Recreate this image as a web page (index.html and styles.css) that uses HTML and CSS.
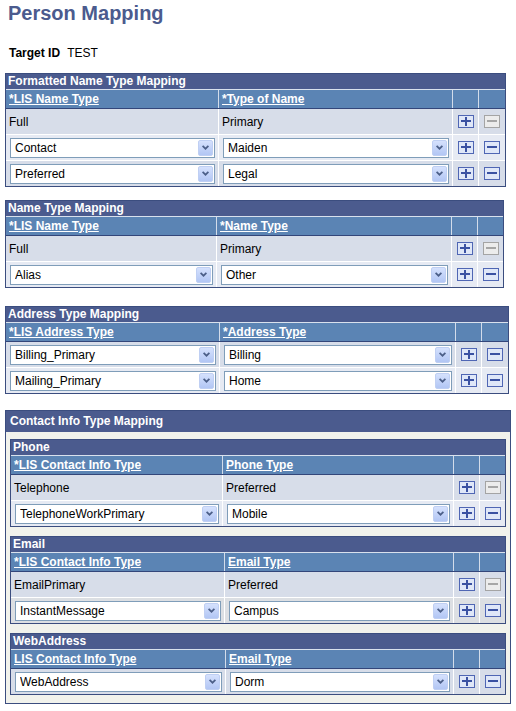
FILE: index.html
```html
<!DOCTYPE html>
<html>
<head>
<meta charset="utf-8">
<title>Person Mapping</title>
<link rel="stylesheet" href="styles.css">
</head>
<body>
<div class="page">
  <h1 class="page-title">Person Mapping</h1>
  <div class="target"><span class="label">Target ID</span> TEST</div>

  <div class="grid g-fmt">
    <div class="grid-title">Formatted Name Type Mapping</div>
    <div class="row hdr">
      <div class="cell"><a href="#">*LIS Name Type</a></div>
      <div class="cell"><a href="#">*Type of Name</a></div>
      <div class="cell"></div>
      <div class="cell"></div>
    </div>
    <div class="row data odd">
      <div class="cell txt">Full</div>
      <div class="cell txt">Primary</div>
      <div class="cell btn-cell"><svg class="ib" viewBox="0 0 16 13"><rect x=".5" y=".5" width="15" height="12" class="ib-add-box"/><path d="M3 6h10M8 2v9" class="ib-add-mark"/></svg></div>
      <div class="cell btn-cell"><svg class="ib" viewBox="0 0 16 13"><rect x=".5" y=".5" width="15" height="12" class="ib-dis-box"/><path d="M3 6h10" class="ib-dis-mark"/></svg></div>
    </div>
    <div class="row data even">
      <div class="cell sel-cell"><div class="select"><span class="val">Contact</span><span class="arrow"><svg width="7" height="5" viewBox="0 0 7 5"><path d="M.6 .8 3.5 3.7 6.4 .8" class="chev"/></svg></span></div></div>
      <div class="cell sel-cell"><div class="select"><span class="val">Maiden</span><span class="arrow"><svg width="7" height="5" viewBox="0 0 7 5"><path d="M.6 .8 3.5 3.7 6.4 .8" class="chev"/></svg></span></div></div>
      <div class="cell btn-cell"><svg class="ib" viewBox="0 0 16 13"><rect x=".5" y=".5" width="15" height="12" class="ib-add-box"/><path d="M3 6h10M8 2v9" class="ib-add-mark"/></svg></div>
      <div class="cell btn-cell"><svg class="ib" viewBox="0 0 16 13"><rect x=".5" y=".5" width="15" height="12" class="ib-add-box"/><path d="M3 6h10" class="ib-add-mark"/></svg></div>
    </div>
    <div class="row data odd">
      <div class="cell sel-cell"><div class="select"><span class="val">Preferred</span><span class="arrow"><svg width="7" height="5" viewBox="0 0 7 5"><path d="M.6 .8 3.5 3.7 6.4 .8" class="chev"/></svg></span></div></div>
      <div class="cell sel-cell"><div class="select"><span class="val">Legal</span><span class="arrow"><svg width="7" height="5" viewBox="0 0 7 5"><path d="M.6 .8 3.5 3.7 6.4 .8" class="chev"/></svg></span></div></div>
      <div class="cell btn-cell"><svg class="ib" viewBox="0 0 16 13"><rect x=".5" y=".5" width="15" height="12" class="ib-add-box"/><path d="M3 6h10M8 2v9" class="ib-add-mark"/></svg></div>
      <div class="cell btn-cell"><svg class="ib" viewBox="0 0 16 13"><rect x=".5" y=".5" width="15" height="12" class="ib-add-box"/><path d="M3 6h10" class="ib-add-mark"/></svg></div>
    </div>
  </div>

  <div class="grid g-name">
    <div class="grid-title">Name Type Mapping</div>
    <div class="row hdr">
      <div class="cell"><a href="#">*LIS Name Type</a></div>
      <div class="cell"><a href="#">*Name Type</a></div>
      <div class="cell"></div>
      <div class="cell"></div>
    </div>
    <div class="row data odd">
      <div class="cell txt">Full</div>
      <div class="cell txt">Primary</div>
      <div class="cell btn-cell"><svg class="ib" viewBox="0 0 16 13"><rect x=".5" y=".5" width="15" height="12" class="ib-add-box"/><path d="M3 6h10M8 2v9" class="ib-add-mark"/></svg></div>
      <div class="cell btn-cell"><svg class="ib" viewBox="0 0 16 13"><rect x=".5" y=".5" width="15" height="12" class="ib-dis-box"/><path d="M3 6h10" class="ib-dis-mark"/></svg></div>
    </div>
    <div class="row data even">
      <div class="cell sel-cell"><div class="select"><span class="val">Alias</span><span class="arrow"><svg width="7" height="5" viewBox="0 0 7 5"><path d="M.6 .8 3.5 3.7 6.4 .8" class="chev"/></svg></span></div></div>
      <div class="cell sel-cell"><div class="select"><span class="val">Other</span><span class="arrow"><svg width="7" height="5" viewBox="0 0 7 5"><path d="M.6 .8 3.5 3.7 6.4 .8" class="chev"/></svg></span></div></div>
      <div class="cell btn-cell"><svg class="ib" viewBox="0 0 16 13"><rect x=".5" y=".5" width="15" height="12" class="ib-add-box"/><path d="M3 6h10M8 2v9" class="ib-add-mark"/></svg></div>
      <div class="cell btn-cell"><svg class="ib" viewBox="0 0 16 13"><rect x=".5" y=".5" width="15" height="12" class="ib-add-box"/><path d="M3 6h10" class="ib-add-mark"/></svg></div>
    </div>
  </div>

  <div class="grid g-addr">
    <div class="grid-title">Address Type Mapping</div>
    <div class="row hdr">
      <div class="cell"><a href="#">*LIS Address Type</a></div>
      <div class="cell"><a href="#">*Address Type</a></div>
      <div class="cell"></div>
      <div class="cell"></div>
    </div>
    <div class="row data odd">
      <div class="cell sel-cell"><div class="select"><span class="val">Billing_Primary</span><span class="arrow"><svg width="7" height="5" viewBox="0 0 7 5"><path d="M.6 .8 3.5 3.7 6.4 .8" class="chev"/></svg></span></div></div>
      <div class="cell sel-cell"><div class="select"><span class="val">Billing</span><span class="arrow"><svg width="7" height="5" viewBox="0 0 7 5"><path d="M.6 .8 3.5 3.7 6.4 .8" class="chev"/></svg></span></div></div>
      <div class="cell btn-cell"><svg class="ib" viewBox="0 0 16 13"><rect x=".5" y=".5" width="15" height="12" class="ib-add-box"/><path d="M3 6h10M8 2v9" class="ib-add-mark"/></svg></div>
      <div class="cell btn-cell"><svg class="ib" viewBox="0 0 16 13"><rect x=".5" y=".5" width="15" height="12" class="ib-add-box"/><path d="M3 6h10" class="ib-add-mark"/></svg></div>
    </div>
    <div class="row data even">
      <div class="cell sel-cell"><div class="select"><span class="val">Mailing_Primary</span><span class="arrow"><svg width="7" height="5" viewBox="0 0 7 5"><path d="M.6 .8 3.5 3.7 6.4 .8" class="chev"/></svg></span></div></div>
      <div class="cell sel-cell"><div class="select"><span class="val">Home</span><span class="arrow"><svg width="7" height="5" viewBox="0 0 7 5"><path d="M.6 .8 3.5 3.7 6.4 .8" class="chev"/></svg></span></div></div>
      <div class="cell btn-cell"><svg class="ib" viewBox="0 0 16 13"><rect x=".5" y=".5" width="15" height="12" class="ib-add-box"/><path d="M3 6h10M8 2v9" class="ib-add-mark"/></svg></div>
      <div class="cell btn-cell"><svg class="ib" viewBox="0 0 16 13"><rect x=".5" y=".5" width="15" height="12" class="ib-add-box"/><path d="M3 6h10" class="ib-add-mark"/></svg></div>
    </div>
  </div>

  <div class="section">
    <div class="section-title">Contact Info Type Mapping</div>
    <div class="section-body">

      <div class="grid g-phone">
        <div class="grid-title">Phone</div>
        <div class="row hdr">
          <div class="cell"><a href="#">*LIS Contact Info Type</a></div>
          <div class="cell"><a href="#">Phone Type</a></div>
          <div class="cell"></div>
          <div class="cell"></div>
        </div>
        <div class="row data odd">
          <div class="cell txt">Telephone</div>
          <div class="cell txt">Preferred</div>
          <div class="cell btn-cell"><svg class="ib" viewBox="0 0 16 13"><rect x=".5" y=".5" width="15" height="12" class="ib-add-box"/><path d="M3 6h10M8 2v9" class="ib-add-mark"/></svg></div>
          <div class="cell btn-cell"><svg class="ib" viewBox="0 0 16 13"><rect x=".5" y=".5" width="15" height="12" class="ib-dis-box"/><path d="M3 6h10" class="ib-dis-mark"/></svg></div>
        </div>
        <div class="row data even">
          <div class="cell sel-cell"><div class="select"><span class="val">TelephoneWorkPrimary</span><span class="arrow"><svg width="7" height="5" viewBox="0 0 7 5"><path d="M.6 .8 3.5 3.7 6.4 .8" class="chev"/></svg></span></div></div>
          <div class="cell sel-cell"><div class="select"><span class="val">Mobile</span><span class="arrow"><svg width="7" height="5" viewBox="0 0 7 5"><path d="M.6 .8 3.5 3.7 6.4 .8" class="chev"/></svg></span></div></div>
          <div class="cell btn-cell"><svg class="ib" viewBox="0 0 16 13"><rect x=".5" y=".5" width="15" height="12" class="ib-add-box"/><path d="M3 6h10M8 2v9" class="ib-add-mark"/></svg></div>
          <div class="cell btn-cell"><svg class="ib" viewBox="0 0 16 13"><rect x=".5" y=".5" width="15" height="12" class="ib-add-box"/><path d="M3 6h10" class="ib-add-mark"/></svg></div>
        </div>
      </div>

      <div class="grid g-email">
        <div class="grid-title">Email</div>
        <div class="row hdr">
          <div class="cell"><a href="#">*LIS Contact Info Type</a></div>
          <div class="cell"><a href="#">Email Type</a></div>
          <div class="cell"></div>
          <div class="cell"></div>
        </div>
        <div class="row data odd">
          <div class="cell txt">EmailPrimary</div>
          <div class="cell txt">Preferred</div>
          <div class="cell btn-cell"><svg class="ib" viewBox="0 0 16 13"><rect x=".5" y=".5" width="15" height="12" class="ib-add-box"/><path d="M3 6h10M8 2v9" class="ib-add-mark"/></svg></div>
          <div class="cell btn-cell"><svg class="ib" viewBox="0 0 16 13"><rect x=".5" y=".5" width="15" height="12" class="ib-dis-box"/><path d="M3 6h10" class="ib-dis-mark"/></svg></div>
        </div>
        <div class="row data even gray">
          <div class="cell sel-cell"><div class="select"><span class="val">InstantMessage</span><span class="arrow"><svg width="7" height="5" viewBox="0 0 7 5"><path d="M.6 .8 3.5 3.7 6.4 .8" class="chev"/></svg></span></div></div>
          <div class="cell sel-cell"><div class="select"><span class="val">Campus</span><span class="arrow"><svg width="7" height="5" viewBox="0 0 7 5"><path d="M.6 .8 3.5 3.7 6.4 .8" class="chev"/></svg></span></div></div>
          <div class="cell btn-cell"><svg class="ib" viewBox="0 0 16 13"><rect x=".5" y=".5" width="15" height="12" class="ib-add-box"/><path d="M3 6h10M8 2v9" class="ib-add-mark"/></svg></div>
          <div class="cell btn-cell"><svg class="ib" viewBox="0 0 16 13"><rect x=".5" y=".5" width="15" height="12" class="ib-add-box"/><path d="M3 6h10" class="ib-add-mark"/></svg></div>
        </div>
      </div>

      <div class="grid g-web">
        <div class="grid-title">WebAddress</div>
        <div class="row hdr">
          <div class="cell"><a href="#">LIS Contact Info Type</a></div>
          <div class="cell"><a href="#">Email Type</a></div>
          <div class="cell"></div>
          <div class="cell"></div>
        </div>
        <div class="row data odd">
          <div class="cell sel-cell"><div class="select"><span class="val">WebAddress</span><span class="arrow"><svg width="7" height="5" viewBox="0 0 7 5"><path d="M.6 .8 3.5 3.7 6.4 .8" class="chev"/></svg></span></div></div>
          <div class="cell sel-cell"><div class="select"><span class="val">Dorm</span><span class="arrow"><svg width="7" height="5" viewBox="0 0 7 5"><path d="M.6 .8 3.5 3.7 6.4 .8" class="chev"/></svg></span></div></div>
          <div class="cell btn-cell"><svg class="ib" viewBox="0 0 16 13"><rect x=".5" y=".5" width="15" height="12" class="ib-add-box"/><path d="M3 6h10M8 2v9" class="ib-add-mark"/></svg></div>
          <div class="cell btn-cell"><svg class="ib" viewBox="0 0 16 13"><rect x=".5" y=".5" width="15" height="12" class="ib-add-box"/><path d="M3 6h10" class="ib-add-mark"/></svg></div>
        </div>
      </div>

    </div>
  </div>
</div>
</body>
</html>
```

FILE: styles.css
```css
body {
  margin: 0;
  background: #fff;
  color: #000;
  font-family: "Liberation Sans", Arial, sans-serif;
  font-size: 12px;
}

.page {
  padding-left: 5px;
}

.page-title {
  margin: 0;
  padding: 1px 0 0 3px;
  font-size: 20px;
  line-height: 24px;
  font-weight: bold;
  color: #4b5b8e;
}

.target {
  margin-top: 21px;
  padding-left: 4px;
  line-height: 14px;
}

.target .label {
  font-weight: bold;
  margin-right: 4px;
}

/* ---------- grids ---------- */
.grid {
  box-sizing: border-box;
  border: 1px solid #3b4d7f;
  background: #d7dde9;
}

.g-fmt  { width: 501px; margin-top: 13px; --cols: 212px 234px 26px 27px; }
.g-name { width: 499px; margin-top: 13px; --cols: 210px 235px 26px 26px; }
.g-addr { width: 504px; margin-top: 18px; --cols: 213px 236px 26px 27px; }
.g-phone { width: 496px; --cols: 211px 231px 26px 26px; }
.g-email { width: 496px; margin-top: 9px; --cols: 213px 229px 26px 26px; }
.g-web   { width: 496px; margin-top: 9px; --cols: 214px 228px 26px 26px; }

.grid-title {
  height: 15px;
  line-height: 15px;
  padding-left: 2px;
  background: #4b5b8e;
  color: #fff;
  font-weight: bold;
  white-space: nowrap;
}

.row {
  display: grid;
  grid-template-columns: var(--cols);
}

.cell {
  box-sizing: border-box;
  display: flex;
  align-items: center;
  min-width: 0;
  white-space: nowrap;
}

.cell + .cell {
  border-left: 1px solid #fff;
}

.hdr {
  box-sizing: border-box;
  height: 20px;
  border-top: 1px solid #d9e1ed;
  border-bottom: 1px solid #33467a;
  background: #5b84b4;
}

.hdr .cell + .cell {
  border-left-color: #d3dcea;
}

.hdr a {
  padding-left: 3px;
  color: #fff;
  font-weight: bold;
  text-decoration: underline;
}

.data {
  box-sizing: border-box;
  height: 25px;
}

.data + .data {
  height: 26px;
  border-top: 1px solid #fff;
}

.odd  { background: #d7dde9; }
.even { background: #e6eaf3; }
.even.gray { background: #dcdfe3; }

.txt {
  padding-left: 3px;
}

.sel-cell {
  padding: 0 3px 0 4px;
}

.btn-cell {
  justify-content: center;
}

/* ---------- dropdown ---------- */
.select {
  flex: 1;
  min-width: 0;
  box-sizing: border-box;
  height: 20px;
  display: flex;
  align-items: center;
  padding-left: 4px;
  border: 1px solid #7f9db9;
  background: #fff;
}

.select .val {
  flex: 1;
  overflow: hidden;
}

.arrow {
  box-sizing: border-box;
  width: 15px;
  height: 16px;
  margin-right: 1px;
  display: flex;
  align-items: center;
  justify-content: center;
  border: 1px solid #bfcff3;
  border-radius: 2px;
  background: linear-gradient(#d5e1fd, #b2c6f4);
}

.arrow svg {
  display: block;
}

.chev {
  fill: none;
  stroke: #4c5f88;
  stroke-width: 1.7;
}

/* ---------- add / delete buttons ---------- */
.ib {
  display: block;
  width: 16px;
  height: 13px;
  margin-top: -1px;
}

.ib-add-box {
  fill: #dfe7f8;
  stroke: #4f66b4;
}

.ib-add-mark {
  stroke: #3a51a2;
  stroke-width: 2;
}

.ib-dis-box {
  fill: #ececec;
  stroke: #a4a4a4;
}

.ib-dis-mark {
  stroke: #a6a6a6;
  stroke-width: 2;
}

/* ---------- contact section ---------- */
.section {
  box-sizing: border-box;
  width: 506px;
  margin-top: 16px;
  padding-bottom: 8px;
  border: 1px solid #3b4d7f;
  background: #f1f2ec;
}

.section-title {
  height: 21px;
  line-height: 21px;
  padding-left: 4px;
  background: #4b5b8e;
  color: #fff;
  font-weight: bold;
}

.section-body {
  padding: 7px 4px 0;
}
```
